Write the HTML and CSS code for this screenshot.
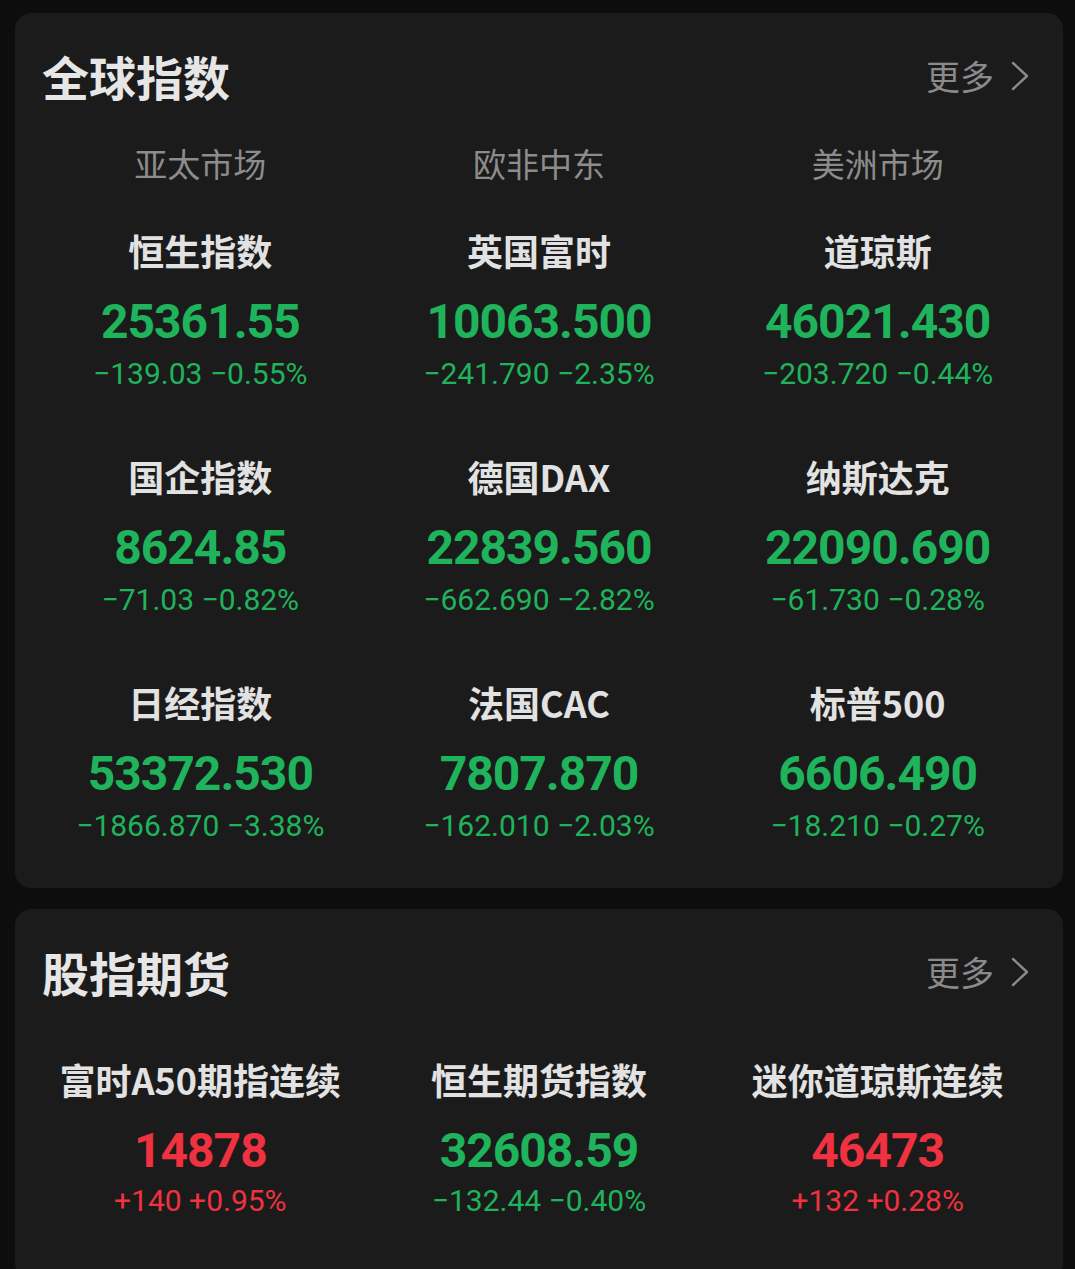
FILE: index.html
```html
<!DOCTYPE html>
<html lang="zh-CN">
<head>
  <meta charset="UTF-8" />
  <title>全球指数</title>
  <meta name="viewport" content="width=device-width, initial-scale=1" />
  <link rel="stylesheet" href="styles.css">
</head>
<body>

  <section class="card">
    <div class="card-head">
      <h2>全球指数</h2>
      <a class="more" href="#">更多
        <svg width="20" height="32" viewBox="0 0 20 32"><polyline points="3,3 17,16 3,29" /></svg>
      </a>
    </div>

    <div class="regions">
      <span>亚太市场</span>
      <span>欧非中东</span>
      <span>美洲市场</span>
    </div>

    <div class="grid">
      <div class="cell down">
        <div class="name">恒生指数</div>
        <div class="price">25361.55</div>
        <div class="change">−139.03 −0.55%</div>
      </div>
      <div class="cell down">
        <div class="name">英国富时</div>
        <div class="price">10063.500</div>
        <div class="change">−241.790 −2.35%</div>
      </div>
      <div class="cell down">
        <div class="name">道琼斯</div>
        <div class="price">46021.430</div>
        <div class="change">−203.720 −0.44%</div>
      </div>

      <div class="cell down">
        <div class="name">国企指数</div>
        <div class="price">8624.85</div>
        <div class="change">−71.03 −0.82%</div>
      </div>
      <div class="cell down">
        <div class="name">德国DAX</div>
        <div class="price">22839.560</div>
        <div class="change">−662.690 −2.82%</div>
      </div>
      <div class="cell down">
        <div class="name">纳斯达克</div>
        <div class="price">22090.690</div>
        <div class="change">−61.730 −0.28%</div>
      </div>

      <div class="cell down">
        <div class="name">日经指数</div>
        <div class="price">53372.530</div>
        <div class="change">−1866.870 −3.38%</div>
      </div>
      <div class="cell down">
        <div class="name">法国CAC</div>
        <div class="price">7807.870</div>
        <div class="change">−162.010 −2.03%</div>
      </div>
      <div class="cell down">
        <div class="name">标普500</div>
        <div class="price">6606.490</div>
        <div class="change">−18.210 −0.27%</div>
      </div>
    </div>
  </section>

  <section class="card futures">
    <div class="card-head">
      <h2>股指期货</h2>
      <a class="more" href="#">更多
        <svg width="20" height="32" viewBox="0 0 20 32"><polyline points="3,3 17,16 3,29" /></svg>
      </a>
    </div>

    <div class="grid">
      <div class="cell up">
        <div class="name">富时A50期指连续</div>
        <div class="price">14878</div>
        <div class="change">+140 +0.95%</div>
      </div>
      <div class="cell down">
        <div class="name">恒生期货指数</div>
        <div class="price">32608.59</div>
        <div class="change">−132.44 −0.40%</div>
      </div>
      <div class="cell up">
        <div class="name">迷你道琼斯连续</div>
        <div class="price">46473</div>
        <div class="change">+132 +0.28%</div>
      </div>
    </div>
  </section>

</body>
</html>
```

FILE: styles.css
```css
* { box-sizing: border-box; }
html, body {
  margin: 0; padding: 0;
  background: #0d0d0d;
  font-family: 'Noto Sans CJK SC', 'Noto Sans', sans-serif;
  color: #e4e4e4;
}
body {
  padding: 13px 12px 0 15px;
  height: 1269px;
  overflow: hidden;
}
.card {
  background: #1b1b1b;
  border-radius: 16px;
  padding: 0 16px 44px;
  margin-bottom: 21px;
}
.card-head {
  height: 128px;
  display: flex; justify-content: space-between;
  align-items: flex-start;
  padding: 38px 17px 0 11px;
}
h2 {
  margin: 0;
  font-size: 47px; line-height: 50px;
  font-weight: 700;
  color: #e6e6e6;
}
.more {
  display: flex; align-items: center;
  gap: 16px;
  margin-top: 6px;
  font-size: 34px; line-height: 38px;
  color: #8a8a8a;
  text-decoration: none;
}
.more svg {
  fill: none; stroke: #8a8a8a;
  stroke-width: 2.4;
  stroke-linecap: round; stroke-linejoin: round;
}
.regions {
  display: grid;
  grid-template-columns: repeat(3, 1fr);
  text-align: center;
  font-size: 33px; line-height: 44px;
  color: #8c8c8c;
}
.grid {
  display: grid;
  grid-template-columns: repeat(3, 1fr);
  row-gap: 63px;
  margin-top: 44px;
  text-align: center;
}
.futures { padding-bottom: 60px; }
.futures .grid { margin-top: 21px; }
.futures .change { margin-top: 4px; }
.name {
  font-size: 36px; line-height: 42px;
  font-weight: 700;
  color: #e2e2e2;
  white-space: nowrap;
}
.price {
  margin-top: 23px;
  font-family: Roboto, 'Noto Sans', sans-serif;
  font-size: 48px; line-height: 56px;
  font-weight: 700;
  letter-spacing: -1px;
}
.change {
  margin-top: 6px;
  font-family: Roboto, 'Noto Sans', sans-serif;
  font-size: 30px; line-height: 36px;
  white-space: nowrap;
}
.down .price, .down .change { color: #1fb35b; }
.up .price, .up .change { color: #f0313f; }
```
